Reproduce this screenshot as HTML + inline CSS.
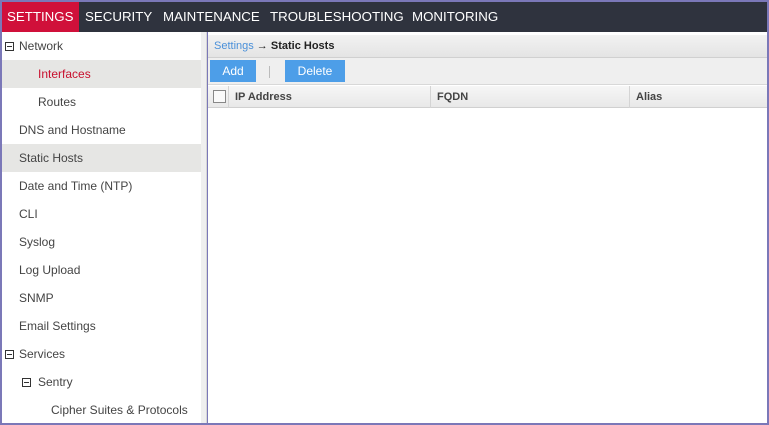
<!DOCTYPE html><html><head><style>
*{margin:0;padding:0;box-sizing:border-box}
body{width:769px;height:425px;background:#7b78b8;font-family:"Liberation Sans",sans-serif;position:relative;overflow:hidden}
#top{position:absolute;left:2px;top:2px;width:765px;height:30px;background:#2f333e;color:#fff;font-size:13.3px}
#top span{position:absolute;top:7px}
#set{position:absolute;left:0;top:0;width:77px;height:30px;background:#d0103a}
#side{position:absolute;left:2px;top:32px;width:199px;height:391px;background:#fff;font-size:12px;color:#444}
#side div{height:28px;line-height:28px;position:relative}
.sel{background:#e6e6e4}
.box{position:absolute;top:10px;width:9px;height:9px;border:1px solid #333}
.box:after{content:"";position:absolute;left:1px;top:3px;width:5px;height:1px;background:#333}
#gut{position:absolute;left:201px;top:32px;width:6px;height:391px;background:#efefef;border-right:1px solid #d6d6d6}
#main{position:absolute;left:208px;top:32px;width:559px;height:391px;background:#fff}
#bc{position:absolute;left:0;top:3px;width:559px;height:23px;background:linear-gradient(#f2f2f2,#e4e4e4);border-bottom:1px solid #d0d0d0;font-size:11px;line-height:23px;padding-left:6px;color:#222}
#tb{position:absolute;left:0;top:26px;width:559px;height:27px;background:#efefef;border-bottom:1px solid #d8d8d8}
.btn{position:absolute;top:2px;height:22px;background:#4d9ee8;color:#fff;font-size:12px;line-height:22px;text-align:center}
#hd{position:absolute;left:0;top:54px;width:559px;height:22px;background:linear-gradient(#f6f6f6,#e8e8e8);border-bottom:1px solid #d0d0d0;font-size:11px;font-weight:bold;color:#444;line-height:22px}
#hd span{position:absolute;top:0;height:22px;border-left:1px solid #d4d4d4;padding-left:6px}
</style></head><body>
<div id="top"><div id="set"></div><span style="left:5px">SETTINGS</span><span style="left:83px">SECURITY</span><span style="left:161px">MAINTENANCE</span><span style="left:268px">TROUBLESHOOTING</span><span style="left:410px">MONITORING</span></div>
<div id="side">
<div style="padding-left:17px"><i class="box" style="left:3px"></i>Network</div>
<div class="sel" style="padding-left:36px;color:#c8102e">Interfaces</div>
<div style="padding-left:36px">Routes</div>
<div style="padding-left:17px">DNS and Hostname</div>
<div class="sel" style="padding-left:17px">Static Hosts</div>
<div style="padding-left:17px">Date and Time (NTP)</div>
<div style="padding-left:17px">CLI</div>
<div style="padding-left:17px">Syslog</div>
<div style="padding-left:17px">Log Upload</div>
<div style="padding-left:17px">SNMP</div>
<div style="padding-left:17px">Email Settings</div>
<div style="padding-left:17px"><i class="box" style="left:3px"></i>Services</div>
<div style="padding-left:36px"><i class="box" style="left:20px"></i>Sentry</div>
<div style="padding-left:49px">Cipher Suites &amp; Protocols</div>
</div>
<div id="gut"></div>
<div id="main">
<div id="bc"><span style="color:#4a90d9">Settings</span> → <b>Static Hosts</b></div>
<div id="tb"><div class="btn" style="left:2px;width:46px">Add</div><div style="position:absolute;left:61px;top:8px;width:1px;height:12px;background:#bbb"></div><div class="btn" style="left:77px;width:60px">Delete</div></div>
<div id="hd"><i style="position:absolute;left:5px;top:4px;width:13px;height:13px;border:1px solid #888;background:#fafafa"></i><span style="left:20px">IP Address</span><span style="left:222px">FQDN</span><span style="left:421px">Alias</span></div>
</div>
</body></html>
